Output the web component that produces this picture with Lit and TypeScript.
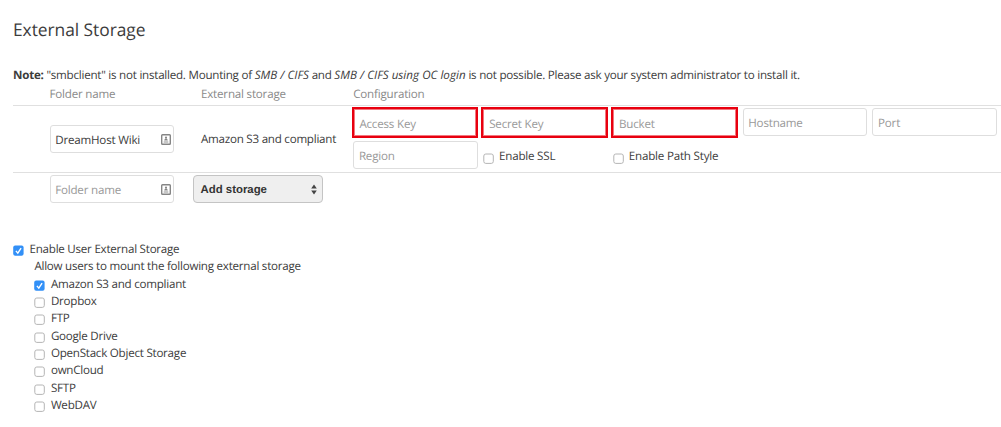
import { LitElement, html, css, svg } from "lit";
import { customElement } from "lit/decorators.js";

const cardIcon = html`<svg class="card" viewBox="0 0 10 11" aria-hidden="true">
  <rect x="0.7" y="0.7" width="8.6" height="9.6" rx="0.8" fill="#fff" stroke="#858585" stroke-width="1.4" />
  <circle cx="5" cy="3.7" r="1.1" fill="#858585" />
  <path d="M3.2 6.6c0-2.4 3.6-2.4 3.6 0z" fill="#858585" />
  <path d="M2.7 8h4.6" stroke="#858585" stroke-width="0.9" />
</svg>`;

const check = (on: boolean) => html`<svg class="check" viewBox="0 0 11 11" aria-hidden="true">
  ${on
    ? svg`<rect x="0.2" y="0.4" width="10.4" height="10.3" rx="2" fill="#3290f7" />
        <path d="M2.9 5.9l1.9 2.2 3.3-5" fill="none" stroke="#fff" stroke-width="1.4" />`
    : svg`<rect x="0.8" y="1" width="9.5" height="9.4" rx="2" fill="#fff" stroke="#b4b4b4" />`}
</svg>`;

@customElement("app-root")
export class AppRoot extends LitElement {
  static styles = css`
    :host {
      display: block;
      box-sizing: border-box;
      width: 1001px;
      height: 427px;
      overflow: hidden;
      background: #fff;
      color: #3c3c3c;
      font: 11.6px/17.35px "Open Sans", sans-serif;
      letter-spacing: -0.24px;
      text-rendering: geometricPrecision;
      white-space: nowrap;
    }
    * { box-sizing: border-box; }
    h2 { margin: 0; padding: 18px 0 0 13px; font-size: 17.4px; line-height: 24px; font-weight: 400; letter-spacing: -0.05px; }
    .note { margin: 25px 0 0 13px; height: 17px; line-height: 18px; letter-spacing: -0.235px; }
    .note i { letter-spacing: 0.03px; }
    .cols { display: grid; grid-template-columns: 188px 152.2px 1fr; margin-left: 13px; }
    .head { height: 22px; line-height: 22px; color: #8a8a8a; border-bottom: 1px solid #e0e0e0; letter-spacing: -0.2px; }
    .head span:first-child, .folder { padding-left: 36.5px; }
    .row { height: 67px; align-items: center; border-bottom: 1px solid #e0e0e0; }
    .field {
      display: flex; align-items: center; justify-content: space-between;
      width: 124.5px; height: 28px; padding: 3px 2px 0 4.7px;
      border: 1px solid #dedede; border-radius: 3px; background: #fff;
      letter-spacing: -0.2px;
    }
    .empty { color: #999; }
    .marked { box-shadow: 0 0 0 2px #e8000f; width: 122.8px; height: 27px; margin: 1px 0 0 0.5px; border-radius: 0; border-color: #f3777e; }
    .config { display: grid; grid-template-columns: repeat(5, 129.8px); grid-template-rows: 28px 28px; row-gap: 5px; align-self: start; margin-top: 2px; }
    .config .field { padding-top: 4px; }
    .opt { display: flex; padding: 7px 0 0 0; letter-spacing: -0.2px; }
    .opt .check { margin: 5px 5px 0 0; }
    .kind { padding-top: 1px; }
    .card { width: 10px; height: 11px; flex: none; margin-top: -3px; }
    .check { width: 11px; height: 11px; flex: none; }
    .add { height: 31px; padding-top: 2px; }
    .select {
      display: flex; align-items: center; justify-content: space-between;
      width: 130px; height: 28px; margin-left: -8px; padding: 1px 5px 0 6.5px;
      border: 1px solid #c4c4c4; border-radius: 4px; background: #efefef;
      font: bold 11.4px "Liberation Sans", sans-serif; letter-spacing: 0; color: #333;
    }
    .arrows { width: 6px; height: 11px; margin-top: -1px; }
    .users { margin: 37px 0 0 13px; }
    .line { display: flex; height: 17.35px; }
    .line .check { margin: 4px 5.5px 0 0; }
    .sub { padding-left: 21.4px; }
  `;

  render() {
    const field = (text: string, cls = "empty") => html`<div class="field ${cls}">${text}</div>`;
    const line = (text: string, on = false) => html`<div class="line">${check(on)}<span>${text}</span></div>`;
    return html`
      <h2>External Storage</h2>
      <div class="note"><b>Note:</b> "smbclient" is not installed. Mounting of <i>SMB / CIFS</i> and <i>SMB / CIFS using OC login</i> is not possible. Please ask your system administrator to install it.</div>
      <div class="cols head"><span>Folder name</span><span>External storage</span><span>Configuration</span></div>
      <div class="cols row">
        <div class="folder"><div class="field"><span>DreamHost Wiki</span>${cardIcon}</div></div>
        <div class="kind">Amazon S3 and compliant</div>
        <div class="config">
          ${["Access Key", "Secret Key", "Bucket"].map((t) => field(t, "empty marked"))}
          ${field("Hostname")}${field("Port")}${field("Region")}
          <div class="opt">${check(false)}<span>Enable SSL</span></div>
          <div class="opt">${check(false)}<span>Enable Path Style</span></div>
        </div>
      </div>
      <div class="cols add">
        <div class="folder"><div class="field empty"><span>Folder name</span>${cardIcon}</div></div>
        <div class="select"><span>Add storage</span>
          <svg class="arrows" viewBox="0 0 6 11"><path d="M0.2 4.6L3 0.6l2.8 4zM0.2 6.4h5.6L3 10.4z" fill="#444" /></svg>
        </div>
      </div>
      <div class="users">
        ${line("Enable User External Storage", true)}
        <div class="sub">
          <div class="line">Allow users to mount the following external storage</div>
          ${line("Amazon S3 and compliant", true)}
          ${["Dropbox", "FTP", "Google Drive", "OpenStack Object Storage", "ownCloud", "SFTP", "WebDAV"].map((t) => line(t))}
        </div>
      </div>
    `;
  }
}
